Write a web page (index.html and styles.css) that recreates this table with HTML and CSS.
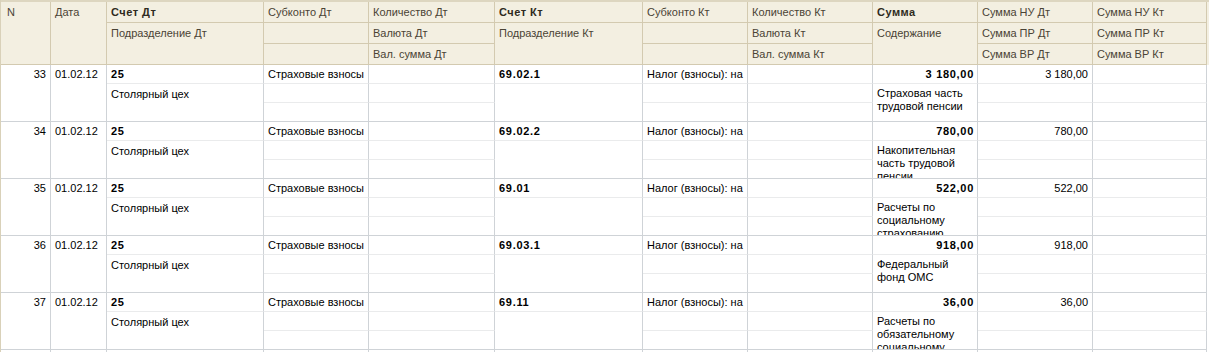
FILE: index.html
```html
<!DOCTYPE html>
<html lang="ru">
<head>
<meta charset="utf-8">
<title>Проводки</title>
<link rel="stylesheet" href="styles.css">
</head>
<body>
<div class="table">
  <div class="rec head">
    <div class="c c1 r13 last">N</div>
    <div class="c c2 r13 last">Дата</div>
    <div class="c c3 r1 b">Счет Дт</div>
    <div class="c c3 r23 last">Подразделение Дт</div>
    <div class="c c4 r1">Субконто Дт</div>
    <div class="c c4 r2"></div>
    <div class="c c4 r3 last"></div>
    <div class="c c5 r1">Количество Дт</div>
    <div class="c c5 r2">Валюта Дт</div>
    <div class="c c5 r3 last">Вал. сумма Дт</div>
    <div class="c c6 r1 b">Счет Кт</div>
    <div class="c c6 r23 last">Подразделение Кт</div>
    <div class="c c7 r1">Субконто Кт</div>
    <div class="c c7 r2"></div>
    <div class="c c7 r3 last"></div>
    <div class="c c8 r1">Количество Кт</div>
    <div class="c c8 r2">Валюта Кт</div>
    <div class="c c8 r3 last">Вал. сумма Кт</div>
    <div class="c c9 r1 b">Сумма</div>
    <div class="c c9 r23 last">Содержание</div>
    <div class="c c10 r1">Сумма НУ Дт</div>
    <div class="c c10 r2">Сумма ПР Дт</div>
    <div class="c c10 r3 last">Сумма ВР Дт</div>
    <div class="c c11 r1">Сумма НУ Кт</div>
    <div class="c c11 r2">Сумма ПР Кт</div>
    <div class="c c11 r3 last">Сумма ВР Кт</div>
  </div>

  <div class="rec row">
    <div class="c c1 r13 last num">33</div>
    <div class="c c2 r13 last">01.02.12</div>
    <div class="c c3 r1 b">25</div>
    <div class="c c3 r23 last">Столярный цех</div>
    <div class="c c4 r1">Страховые взносы</div><div class="c c4 r2"></div><div class="c c4 r3 last"></div>
    <div class="c c5 r1"></div><div class="c c5 r2"></div><div class="c c5 r3 last"></div>
    <div class="c c6 r1 b">69.02.1</div>
    <div class="c c6 r23 last"></div>
    <div class="c c7 r1">Налог (взносы): на</div><div class="c c7 r2"></div><div class="c c7 r3 last"></div>
    <div class="c c8 r1"></div><div class="c c8 r2"></div><div class="c c8 r3 last"></div>
    <div class="c c9 r1 b num">3 180,00</div>
    <div class="c c9 r23 last wrap">Страховая часть трудовой пенсии</div>
    <div class="c c10 r1 num">3 180,00</div><div class="c c10 r2"></div><div class="c c10 r3 last"></div>
    <div class="c c11 r1"></div><div class="c c11 r2"></div><div class="c c11 r3 last"></div>
  </div>

  <div class="rec row">
    <div class="c c1 r13 last num">34</div>
    <div class="c c2 r13 last">01.02.12</div>
    <div class="c c3 r1 b">25</div>
    <div class="c c3 r23 last">Столярный цех</div>
    <div class="c c4 r1">Страховые взносы</div><div class="c c4 r2"></div><div class="c c4 r3 last"></div>
    <div class="c c5 r1"></div><div class="c c5 r2"></div><div class="c c5 r3 last"></div>
    <div class="c c6 r1 b">69.02.2</div>
    <div class="c c6 r23 last"></div>
    <div class="c c7 r1">Налог (взносы): на</div><div class="c c7 r2"></div><div class="c c7 r3 last"></div>
    <div class="c c8 r1"></div><div class="c c8 r2"></div><div class="c c8 r3 last"></div>
    <div class="c c9 r1 b num">780,00</div>
    <div class="c c9 r23 last wrap">Накопительная часть трудовой пенсии</div>
    <div class="c c10 r1 num">780,00</div><div class="c c10 r2"></div><div class="c c10 r3 last"></div>
    <div class="c c11 r1"></div><div class="c c11 r2"></div><div class="c c11 r3 last"></div>
  </div>

  <div class="rec row">
    <div class="c c1 r13 last num">35</div>
    <div class="c c2 r13 last">01.02.12</div>
    <div class="c c3 r1 b">25</div>
    <div class="c c3 r23 last">Столярный цех</div>
    <div class="c c4 r1">Страховые взносы</div><div class="c c4 r2"></div><div class="c c4 r3 last"></div>
    <div class="c c5 r1"></div><div class="c c5 r2"></div><div class="c c5 r3 last"></div>
    <div class="c c6 r1 b">69.01</div>
    <div class="c c6 r23 last"></div>
    <div class="c c7 r1">Налог (взносы): на</div><div class="c c7 r2"></div><div class="c c7 r3 last"></div>
    <div class="c c8 r1"></div><div class="c c8 r2"></div><div class="c c8 r3 last"></div>
    <div class="c c9 r1 b num">522,00</div>
    <div class="c c9 r23 last wrap">Расчеты по социальному страхованию</div>
    <div class="c c10 r1 num">522,00</div><div class="c c10 r2"></div><div class="c c10 r3 last"></div>
    <div class="c c11 r1"></div><div class="c c11 r2"></div><div class="c c11 r3 last"></div>
  </div>

  <div class="rec row">
    <div class="c c1 r13 last num">36</div>
    <div class="c c2 r13 last">01.02.12</div>
    <div class="c c3 r1 b">25</div>
    <div class="c c3 r23 last">Столярный цех</div>
    <div class="c c4 r1">Страховые взносы</div><div class="c c4 r2"></div><div class="c c4 r3 last"></div>
    <div class="c c5 r1"></div><div class="c c5 r2"></div><div class="c c5 r3 last"></div>
    <div class="c c6 r1 b">69.03.1</div>
    <div class="c c6 r23 last"></div>
    <div class="c c7 r1">Налог (взносы): на</div><div class="c c7 r2"></div><div class="c c7 r3 last"></div>
    <div class="c c8 r1"></div><div class="c c8 r2"></div><div class="c c8 r3 last"></div>
    <div class="c c9 r1 b num">918,00</div>
    <div class="c c9 r23 last wrap">Федеральный фонд ОМС</div>
    <div class="c c10 r1 num">918,00</div><div class="c c10 r2"></div><div class="c c10 r3 last"></div>
    <div class="c c11 r1"></div><div class="c c11 r2"></div><div class="c c11 r3 last"></div>
  </div>

  <div class="rec row">
    <div class="c c1 r13 last num">37</div>
    <div class="c c2 r13 last">01.02.12</div>
    <div class="c c3 r1 b">25</div>
    <div class="c c3 r23 last">Столярный цех</div>
    <div class="c c4 r1">Страховые взносы</div><div class="c c4 r2"></div><div class="c c4 r3 last"></div>
    <div class="c c5 r1"></div><div class="c c5 r2"></div><div class="c c5 r3 last"></div>
    <div class="c c6 r1 b">69.11</div>
    <div class="c c6 r23 last"></div>
    <div class="c c7 r1">Налог (взносы): на</div><div class="c c7 r2"></div><div class="c c7 r3 last"></div>
    <div class="c c8 r1"></div><div class="c c8 r2"></div><div class="c c8 r3 last"></div>
    <div class="c c9 r1 b num">36,00</div>
    <div class="c c9 r23 last wrap">Расчеты по обязательному социальному страхованию</div>
    <div class="c c10 r1 num">36,00</div><div class="c c10 r2"></div><div class="c c10 r3 last"></div>
    <div class="c c11 r1"></div><div class="c c11 r2"></div><div class="c c11 r3 last"></div>
  </div>

  <div class="rec row">
    <div class="c c1 r13 last"></div>
    <div class="c c2 r13 last"></div>
    <div class="c c3 r1"></div><div class="c c3 r23 last"></div>
    <div class="c c4 r1"></div><div class="c c4 r2"></div><div class="c c4 r3 last"></div>
    <div class="c c5 r1"></div><div class="c c5 r2"></div><div class="c c5 r3 last"></div>
    <div class="c c6 r1"></div><div class="c c6 r23 last"></div>
    <div class="c c7 r1"></div><div class="c c7 r2"></div><div class="c c7 r3 last"></div>
    <div class="c c8 r1"></div><div class="c c8 r2"></div><div class="c c8 r3 last"></div>
    <div class="c c9 r1"></div><div class="c c9 r23 last"></div>
    <div class="c c10 r1"></div><div class="c c10 r2"></div><div class="c c10 r3 last"></div>
    <div class="c c11 r1"></div><div class="c c11 r2"></div><div class="c c11 r3 last"></div>
  </div>
</div>
</body>
</html>
```

FILE: styles.css
```css
html, body {
  margin: 0;
  padding: 0;
  background: #ffffff;
  overflow: hidden;
}

body {
  width: 1209px;
  height: 352px;
  font-family: "Liberation Sans", Arial, sans-serif;
  font-size: 11px;
  color: #000000;
}

.table {
  height: 352px;
  overflow: hidden;
  border-left: 1px solid #d9d1b9;
}

.rec {
  display: grid;
  grid-template-columns: 50px 56px 157px 105px 126px 148px 105px 125px 105px 115px 114px;
}

.head {
  grid-template-rows: 21px 21px 21px;
  background: #f3efe1;
  border-top: 2px solid #ddd6c0;
  color: #4a4335;
}

.row {
  grid-template-rows: 19px 19px 19px;
}

.c {
  box-sizing: border-box;
  padding: 0 4px;
  white-space: nowrap;
  overflow: hidden;
}

.head .c {
  line-height: 20px;
  border-right: 1px solid #d3cab0;
  border-bottom: 1px solid #d3cab0;
}

.row .c {
  line-height: 18px;
  border-right: 1px solid #cfd3d7;
  border-bottom: 1px solid #eaebec;
}

.row .c.last {
  border-bottom-color: #cfd3d7;
}

.c1 { grid-column: 1; }
.c2 { grid-column: 2; }
.c3 { grid-column: 3; }
.c4 { grid-column: 4; }
.c5 { grid-column: 5; }
.c6 { grid-column: 6; }
.c7 { grid-column: 7; }
.c8 { grid-column: 8; }
.c9 { grid-column: 9; }
.c10 { grid-column: 10; }
.c11 { grid-column: 11; }

.r1 { grid-row: 1; }
.r2 { grid-row: 2; }
.r3 { grid-row: 3; }
.r23 { grid-row: 2 / 4; }
.r13 { grid-row: 1 / 4; }

.head .c1 { padding-left: 6px; }

.b {
  font-weight: bold;
  letter-spacing: 0.7px;
}
.head .b {
  color: #2e2a20;
  letter-spacing: 0.5px;
}

.num { text-align: right; }
.row .b.num { padding-right: 3px; }

.row .wrap {
  white-space: normal;
  line-height: 13px;
  padding-top: 3px;
}

.row .c3.r23 { line-height: 20px; }
```
